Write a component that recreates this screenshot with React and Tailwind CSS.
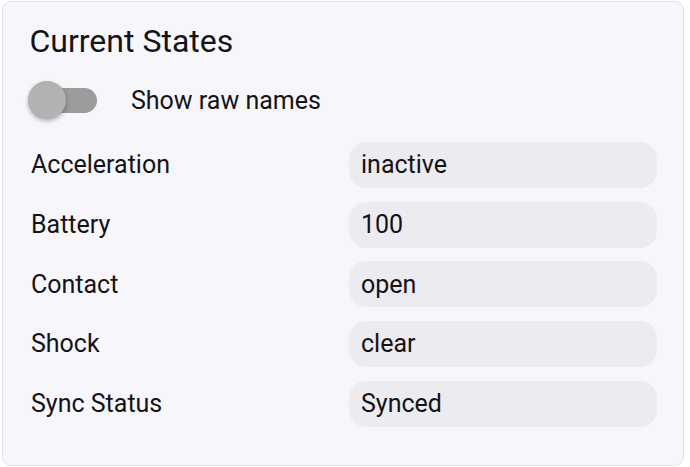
import { useState } from 'react';

const states = [
    { name: 'Acceleration', value: 'inactive' },
    { name: 'Battery', value: '100' },
    { name: 'Contact', value: 'open' },
    { name: 'Shock', value: 'clear' },
    { name: 'Sync Status', value: 'Synced' },
];

function Toggle({ checked, onChange }) {
    return (
        <button
            type="button"
            onClick={() => onChange(!checked)}
            className="relative flex items-center w-[70px] h-[38px]"
        >
            <span className="absolute left-[17px] top-[6.5px] w-[52px] h-[25px] rounded-full bg-[#9c9c9c]" />
            <span className="absolute left-0 top-0 w-[38px] h-[38px] rounded-full bg-[#b2b2b2] shadow-[0_2px_4px_rgba(0,0,0,0.3)]" />
        </button>
    );
}

function App() {
    const [raw, setRaw] = useState(false);

    return (
        <div className="w-[690px] h-[467px] bg-white pl-[2px] pt-[1px] pr-[6px] pb-[1px] font-['Roboto',sans-serif] text-[#141317]">
            <div className="w-full h-full rounded-[9px] border border-[#e3e2e7] bg-[#f7f6fb] pl-[25px] pr-[26px] pt-[20px]">
                <h2 className="pl-[1.5px] text-[32px] leading-[38.4px]">Current States</h2>

                <div className="flex items-center mt-[21px] h-[38px]">
                    <Toggle checked={raw} onChange={setRaw} />
                    <span className="ml-[33px] text-[25px]">Show raw names</span>
                </div>

                <div className="grid grid-cols-[321px_1fr] gap-y-[13.75px] mt-[22.5px]">
                    {states.map((s) => (
                        <div key={s.name} className="contents">
                            <div className="flex items-center h-[46px] pl-[3px] text-[25px]">
                                {s.name}
                            </div>
                            <div className="flex items-center h-[46px] rounded-[17px] bg-[#ecebf0] px-[12px] text-[25px]">
                                {s.value}
                            </div>
                        </div>
                    ))}
                </div>
            </div>
        </div>
    );
}

export default App;
